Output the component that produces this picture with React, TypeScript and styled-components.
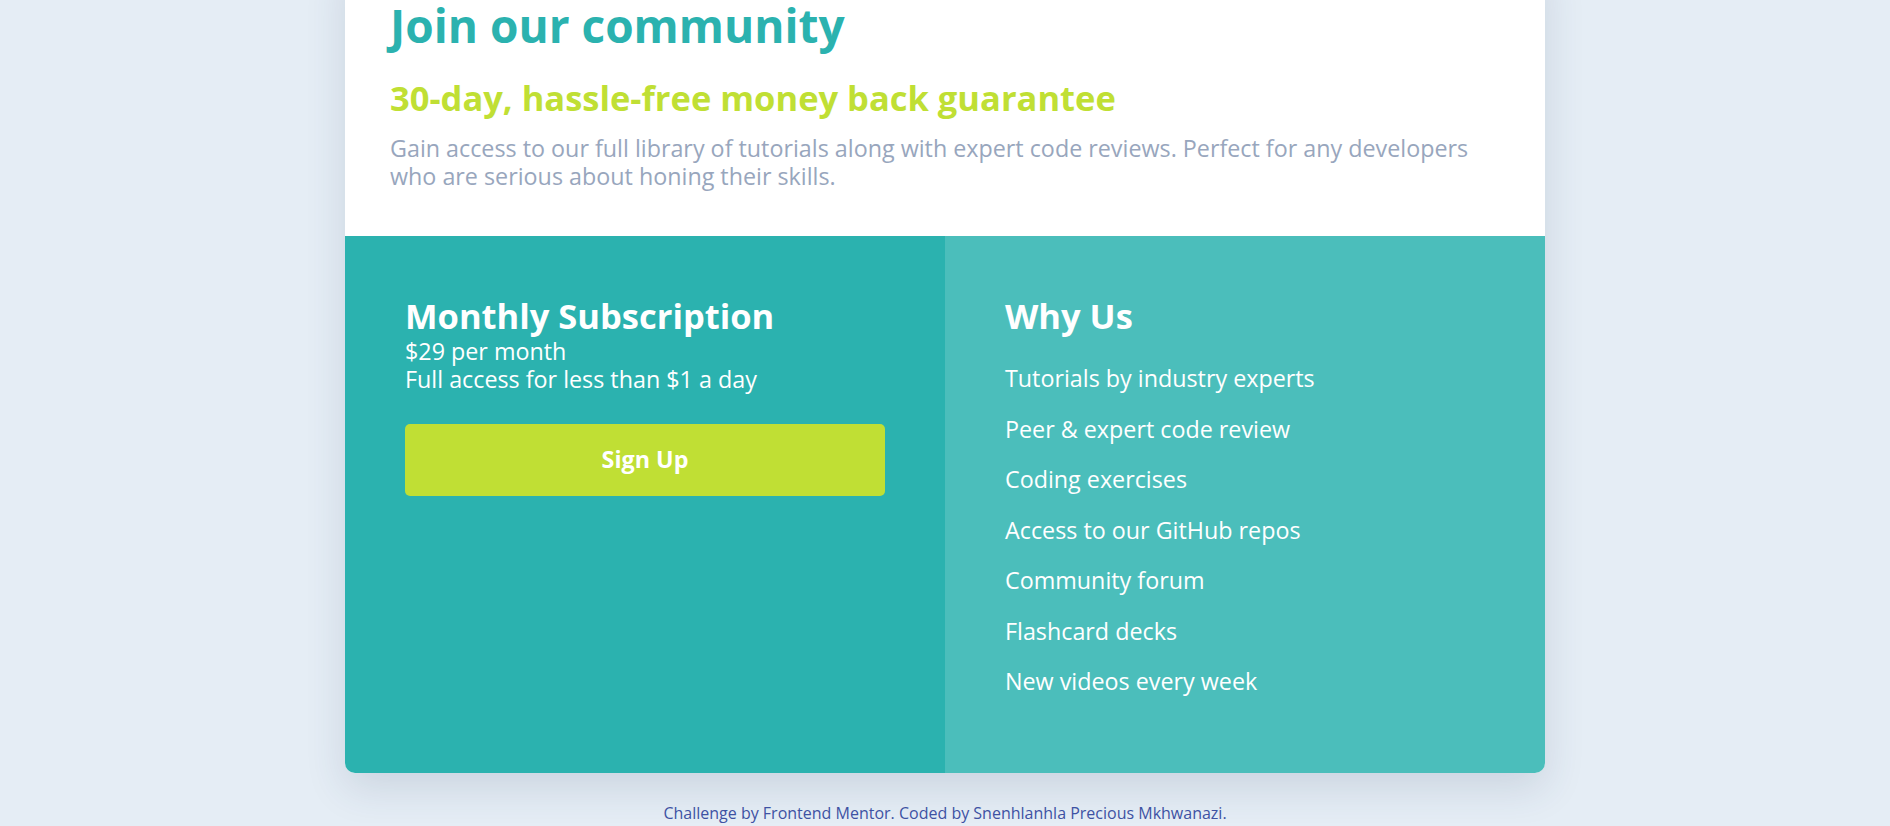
import React from "react";
import styled, { createGlobalStyle } from "styled-components";

const GlobalStyle = createGlobalStyle`
  *, *::before, *::after { box-sizing: border-box; }
  html, body { margin: 0; padding: 0; }
  body {
    background: #e5edf5;
    font-family: "Open Sans", "Noto Sans", sans-serif;
    -webkit-font-smoothing: antialiased;
  }
  h1, h2, p, ul { margin: 0; padding: 0; }
`;

const Page = styled.main`
  display: flex;
  flex-direction: column;
  align-items: center;
`;

const Card = styled.section`
  width: 1200px;
  margin-top: -42px;
  background: #ffffff;
  border-radius: 10px;
  overflow: hidden;
  box-shadow: 0 15px 40px rgba(41, 62, 102, 0.14);
`;

const Intro = styled.div`
  padding: 40px 45px 46px;
`;

const Title = styled.h1`
  color: #2bb2af;
  font-size: 46px;
  font-weight: 700;
  line-height: 55px;
`;

const Guarantee = styled.h2`
  margin-top: 24px;
  color: #c0df34;
  font-size: 34.5px;
  font-weight: 700;
  line-height: 42px;
`;

const Lead = styled.p`
  margin-top: 15px;
  color: #98a6bd;
  font-size: 23.3px;
  font-weight: 400;
  line-height: 28px;
`;

const Panels = styled.div`
  display: grid;
  grid-template-columns: 1fr 1fr;
`;

const Panel = styled.div<{ $tone: "dark" | "light" }>`
  display: flex;
  flex-direction: column;
  align-items: stretch;
  padding: 60px 60px ${(p) => (p.$tone === "light" ? "77px" : "60px")};
  background: ${(p) => (p.$tone === "dark" ? "#2bb2af" : "#4bbebb")};
  color: #ffffff;
`;

const PanelTitle = styled.h2`
  font-size: 34.5px;
  font-weight: 700;
  line-height: 40px;
  color: #ffffff;
`;

const PlanDetails = styled.p`
  margin-top: 2px;
  font-size: 23.3px;
  font-weight: 400;
  line-height: 27.5px;
`;

const SignUp = styled.button`
  margin-top: 31px;
  height: 72px;
  width: 100%;
  border: none;
  border-radius: 5px;
  background: #c0df34;
  color: #ffffff;
  font-family: inherit;
  font-size: 23.3px;
  font-weight: 700;
  line-height: 27.5px;
  cursor: pointer;
`;

const Features = styled.ul`
  margin-top: 29px;
  list-style: none;
  display: flex;
  flex-direction: column;
  gap: 23px;
`;

const Feature = styled.li`
  font-size: 23.3px;
  font-weight: 400;
  line-height: 27.5px;
`;

const Attribution = styled.footer`
  margin-top: 30px;
  color: #3e52a3;
  font-size: 16px;
  line-height: 20px;
  text-align: center;
`;

const Credit = styled.a`
  color: #3e52a3;
  text-decoration: none;
`;

const features = [
  "Tutorials by industry experts",
  "Peer & expert code review",
  "Coding exercises",
  "Access to our GitHub repos",
  "Community forum",
  "Flashcard decks",
  "New videos every week",
];

export default function App() {
  return (
    <>
      <GlobalStyle />
      <Page>
        <Card>
          <Intro>
            <Title>Join our community</Title>
            <Guarantee>30-day, hassle-free money back guarantee</Guarantee>
            <Lead>
              Gain access to our full library of tutorials along with expert code reviews. Perfect for any
              developers who are serious about honing their skills.
            </Lead>
          </Intro>
          <Panels>
            <Panel $tone="dark">
              <PanelTitle>Monthly Subscription</PanelTitle>
              <PlanDetails>
                $29 per month
                <br />
                Full access for less than $1 a day
              </PlanDetails>
              <SignUp type="button">Sign Up</SignUp>
            </Panel>
            <Panel $tone="light">
              <PanelTitle>Why Us</PanelTitle>
              <Features>
                {features.map((f) => (
                  <Feature key={f}>{f}</Feature>
                ))}
              </Features>
            </Panel>
          </Panels>
        </Card>
        <Attribution>
          Challenge by <Credit href="#">Frontend Mentor</Credit>. Coded by{" "}
          <Credit href="#">Snenhlanhla Precious Mkhwanazi</Credit>.
        </Attribution>
      </Page>
    </>
  );
}
